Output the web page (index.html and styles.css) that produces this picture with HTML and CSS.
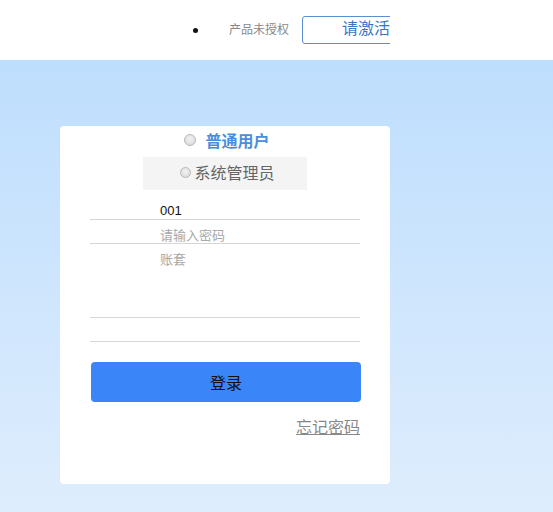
FILE: index.html
```html
<!DOCTYPE html>
<html lang="zh">
<head>
<meta charset="utf-8">
<title>登录</title>
<link rel="stylesheet" href="styles.css">
</head>
<body>
<header class="top">
  <div class="top-inner">
    <span class="dot"></span>
    <span class="license">产品未授权</span>
    <span class="activate">请激活</span>
  </div>
</header>
<main class="stage">
  <section class="card">
    <div class="role role-user">
      <span class="radio"></span>
      <span class="role-label">普通用户</span>
    </div>
    <div class="role role-admin">
      <span class="radio"></span>
      <span class="role-label">系统管理员</span>
    </div>
    <div class="fields">
      <div class="field f-user"><span class="value">001</span></div>
      <div class="field f-pass"><span class="ph">请输入密码</span></div>
      <div class="field f-set"><span class="ph">账套</span></div>
      <div class="field f-empty"></div>
    </div>
    <div class="login">登录</div>
    <div class="forgot-row"><span class="forgot">忘记密码</span></div>
  </section>
</main>
</body>
</html>
```
FILE: styles.css
```css
html, body {
  margin: 0;
  padding: 0;
  height: 100%;
}
body {
  font-family: "Liberation Sans", "Noto Sans CJK SC", sans-serif;
  background: #ffffff;
}
.top {
  height: 60px;
  background: #ffffff;
}
.top-inner {
  margin-left: 60px;
  width: 330px;
  height: 60px;
  overflow: hidden;
  display: flex;
  align-items: center;
}
.dot {
  flex: none;
  width: 5px;
  height: 5px;
  border-radius: 50%;
  background: #111;
  margin-left: 133px;
}
.license {
  flex: none;
  margin-left: 31px;
  font-size: 12px;
  color: #888;
  line-height: 16px;
}
.activate {
  flex: none;
  box-sizing: border-box;
  margin-left: 13px;
  width: 130px;
  height: 28px;
  border: 1px solid #5b8fcf;
  border-radius: 3px;
  padding-left: 39px;
  font-size: 16px;
  line-height: 24px;
  color: #3a76c6;
}
.stage {
  height: calc(100% - 60px);
  min-height: 452px;
  background: linear-gradient(to bottom, #bedefd 0%, #deedfd 100%);
  padding-top: 66px;
  box-sizing: border-box;
}
.card {
  margin-left: 60px;
  width: 330px;
  height: 358px;
  background: #ffffff;
  border-radius: 4px;
}
.role {
  display: flex;
  align-items: center;
  justify-content: center;
}
.role-user {
  box-sizing: border-box;
  height: 31px;
  padding-left: 4px;
  padding-bottom: 3px;
}
.role-user .radio {
  margin-right: 9px;
  margin-top: 0;
}
.role-user .role-label {
  font-weight: bold;
  font-size: 16px;
  color: #4a8ddc;
}
.role-admin {
  margin-left: 83px;
  width: 164px;
  height: 33px;
  background: #f4f4f4;
  padding-left: 5px;
  padding-bottom: 3px;
  box-sizing: border-box;
}
.role-admin .radio {
  width: 11px;
  height: 11px;
  margin-right: 3px;
  margin-top: 0;
}
.role-admin .role-label {
  font-size: 16px;
  color: #666;
}
.radio {
  flex: none;
  box-sizing: border-box;
  width: 12px;
  height: 12px;
  border-radius: 50%;
  border: 1px solid #b8b8b8;
  background: radial-gradient(circle at 50% 40%, #f2f2f2 0%, #dcdcdc 80%);
}
.fields {
  margin-top: 10px;
  margin-left: 30px;
  width: 270px;
}
.field {
  border-bottom: 1px solid #d6d6d6;
  padding-left: 70px;
  font-size: 13px;
  line-height: 15px;
  display: flex;
}
.f-user {
  height: 19px;
  align-items: flex-end;
}
.f-user .value {
  color: #111;
  padding-bottom: 1px;
}
.f-pass {
  height: 23px;
  align-items: flex-end;
}
.f-set {
  height: 73px;
  align-items: flex-start;
}
.f-set .ph {
  padding-top: 8px;
}
.f-empty {
  height: 23px;
}
.ph {
  color: #a8a8a8;
}
.login {
  box-sizing: border-box;
  margin-top: 20px;
  margin-left: 31px;
  width: 270px;
  height: 40px;
  border-radius: 4px;
  background: #3a86f8;
  color: #111;
  font-size: 16px;
  line-height: 40px;
  padding-top: 2px;
  text-align: center;
}
.forgot-row {
  margin-top: 16px;
  width: 300px;
  display: flex;
  justify-content: flex-end;
}
.forgot {
  font-size: 16px;
  line-height: 20px;
  color: #888;
  text-decoration: underline;
}
```
